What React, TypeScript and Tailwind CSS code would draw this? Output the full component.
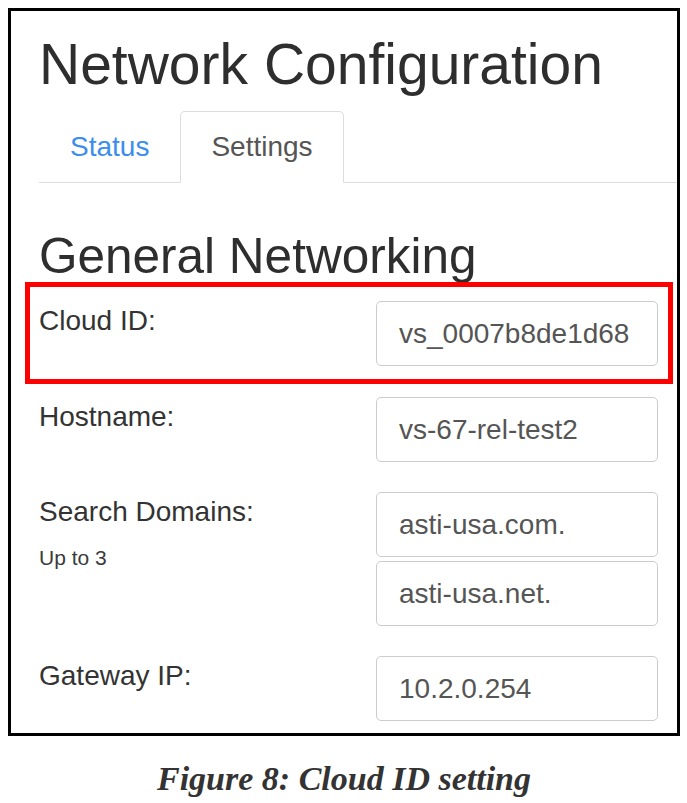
import React from 'react';

const sans = { fontFamily: '"Liberation Sans", Arial, sans-serif' };

const Field: React.FC<{ value: string; className?: string }> = ({ value, className = '' }) => (
  <div
    className={`h-[65px] w-[282px] flex items-center pl-[22px] border border-[#cccccc] rounded-[5px] bg-white text-[28px] text-[#555555] ${className}`}
  >
    {value}
  </div>
);

const App: React.FC = () => {
  return (
    <div className="min-h-[803px] bg-white pt-2 pl-2" style={sans}>
      <div className="w-[672px] h-[728px] border-[3px] border-black pl-[28px]">
        <h1 className="mt-[25px] text-[57px] leading-[56px] text-[#2e2e2e]">Network Configuration</h1>

        <ul className="mt-[19px] flex border-b border-[#dddddd]">
          <li className="-mb-px h-[72px] flex items-center px-[30px] border border-transparent text-[28px] text-[#3c8dee]">
            Status
          </li>
          <li className="-mb-px h-[72px] flex items-center px-[30px] border border-[#dddddd] border-b-white rounded-t-[5px] bg-white text-[28px] text-[#555555]">
            Settings
          </li>
        </ul>

        <h2 className="mt-[49px] text-[49.5px] leading-[48px] text-[#2e2e2e]">General Networking</h2>

        <div className="mt-[21px] pr-[19px] text-[#333333]">
          <div className="relative flex justify-between">
            <div className="text-[28px] leading-[40px]">Cloud ID:</div>
            <Field value="vs_0007b8de1d68" />
            <div className="absolute -top-[19px] -left-[14px] -right-[15px] -bottom-[18px] border-[5px] border-[#ff0000] pointer-events-none" />
          </div>

          <div className="mt-[31px] flex justify-between">
            <div className="text-[28px] leading-[40px]">Hostname:</div>
            <Field value="vs-67-rel-test2" />
          </div>

          <div className="mt-[30px] flex justify-between">
            <div>
              <div className="text-[28px] leading-[40px]">Search Domains:</div>
              <div className="mt-[12px] text-[21px] leading-[28px] text-[#3a3a3a]">Up to 3</div>
            </div>
            <div className="flex flex-col gap-[4px]">
              <Field value="asti-usa.com." />
              <Field value="asti-usa.net." className="h-[64px]" />
            </div>
          </div>

          <div className="mt-[30px] flex justify-between">
            <div className="text-[28px] leading-[40px]">Gateway IP:</div>
            <Field value="10.2.0.254" />
          </div>
        </div>
      </div>

      <p
        className="mt-[23px] w-[672px] text-center text-[34px] leading-[40px] font-bold italic text-[#333333]"
        style={{ fontFamily: '"Liberation Serif", "Times New Roman", serif' }}
      >
        Figure 8: Cloud ID setting
      </p>
    </div>
  );
};

export default App;
